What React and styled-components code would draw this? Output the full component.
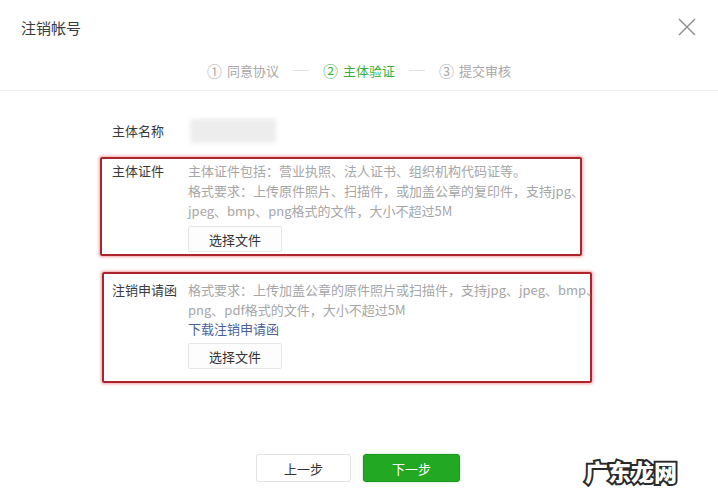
import React from "react";
import styled, { createGlobalStyle } from "styled-components";

const Global = createGlobalStyle`
  html, body { margin: 0; padding: 0; background: #fff; }
  body { font-family: "Noto Sans CJK SC", "Noto Sans", sans-serif; color: #333; }
  * { box-sizing: border-box; }
`;

const Page = styled.div`
  position: relative;
  width: 718px;
  height: 500px;
  overflow: hidden;
  display: flex;
  flex-direction: column;
`;

const Header = styled.div`
  height: 54px;
  display: flex;
  align-items: center;
  justify-content: space-between;
  padding: 0 22px 0 21px;
`;

const Title = styled.div`
  font-size: 15px;
  color: #3a3a3a;
`;

const Close = styled.svg`
  width: 18px;
  height: 18px;
  display: block;
`;

const Steps = styled.div`
  height: 37px;
  padding-bottom: 3px;
  border-bottom: 1px solid #ececec;
  display: flex;
  align-items: center;
  justify-content: center;
  gap: 14px;
`;

const Step = styled.div`
  display: flex;
  align-items: center;
  gap: 5px;
  font-size: 13px;
  color: ${(p) => (p.$active ? "#3aae3a" : "#a8a8a8")};
`;

const Num = styled.span`
  font-size: 15px;
`;

const Dash = styled.div`
  width: 16px;
  height: 1px;
  background: #e2e2e2;
`;

const Form = styled.div`
  padding: 30px 0 0 100px;
  display: flex;
  flex-direction: column;
`;

const NameRow = styled.div`
  display: flex;
  align-items: center;
  padding-left: 12px;
  height: 20px;
  margin-bottom: 16px;
`;

const Label = styled.div`
  width: 76px;
  flex: none;
  font-size: 13px;
  line-height: 20px;
  color: #3a3a3a;
`;

const Blurred = styled.div`
  width: 86px;
  height: 24px;
  margin-left: 2px;
  background: #ededed;
  filter: blur(2px);
`;

const Highlight = styled.div`
  display: flex;
  align-items: flex-start;
  margin-left: ${(p) => p.$offset}px;
  width: ${(p) => p.$width}px;
  padding: ${(p) => p.$pad};
  border: 2px solid #ad242b;
  border-radius: 2px;
  box-shadow: 0 0 3px 1px rgba(235, 130, 135, 0.75);
  margin-bottom: ${(p) => p.$gap || 0}px;
`;

const Content = styled.div`
  display: flex;
  flex-direction: column;
  align-items: flex-start;
`;

const Desc = styled.div`
  font-size: 13px;
  line-height: 20px;
  color: #a6a6a6;
  white-space: nowrap;
`;

const Link = styled.a`
  font-size: 13px;
  line-height: 18px;
  color: #4a5f9a;
  text-decoration: none;
`;

const FileButton = styled.div`
  margin-top: 5px;
  width: 94px;
  height: 26px;
  border: 1px solid #e6e6e6;
  border-radius: 2px;
  background: #fdfdfd;
  display: flex;
  align-items: center;
  justify-content: center;
  font-size: 13px;
  color: #333;
`;

const Footer = styled.div`
  margin-top: auto;
  padding-bottom: 18px;
  display: flex;
  justify-content: center;
  gap: 12px;
  padding-right: 2px;
`;

const Button = styled.div`
  width: ${(p) => (p.$primary ? 97 : 95)}px;
  height: 28px;
  border-radius: 3px;
  display: flex;
  align-items: center;
  justify-content: center;
  font-size: 13px;
  background: ${(p) => (p.$primary ? "#22a823" : "#fff")};
  color: ${(p) => (p.$primary ? "#fff" : "#333")};
  border: 1px solid ${(p) => (p.$primary ? "#1e9a1f" : "#e3e3e3")};
  box-shadow: ${(p) => (p.$primary ? "0 0 2px rgba(60,180,60,0.5)" : "none")};
`;

const Watermark = styled.div`
  position: absolute;
  left: 585px;
  top: 454px;
  font-size: 23px;
  font-weight: 900;
  color: #fff;
  -webkit-text-stroke: 4px #2a2a2a;
  paint-order: stroke fill;
`;

export default function App() {
  return (
    <Page>
      <Global />
      <Header>
        <Title>注销帐号</Title>
        <Close viewBox="0 0 18 18">
          <path d="M1 1 L17 17 M17 1 L1 17" stroke="#8a8a8a" strokeWidth="1.3" fill="none" />
        </Close>
      </Header>
      <Steps>
        <Step>
          <Num>①</Num>同意协议
        </Step>
        <Dash />
        <Step $active>
          <Num>②</Num>主体验证
        </Step>
        <Dash />
        <Step>
          <Num>③</Num>提交审核
        </Step>
      </Steps>
      <Form>
        <NameRow>
          <Label>主体名称</Label>
          <Blurred />
        </NameRow>
        <Highlight $offset={0} $width={482} $pad="2px 0 2px 10px" $gap={16}>
          <Label>主体证件</Label>
          <Content>
            <Desc>主体证件包括：营业执照、法人证书、组织机构代码证等。</Desc>
            <Desc>格式要求：上传原件照片、扫描件，或加盖公章的复印件，支持jpg、</Desc>
            <Desc>jpeg、bmp、png格式的文件，大小不超过5M</Desc>
            <FileButton>选择文件</FileButton>
          </Content>
        </Highlight>
        <Highlight $offset={2} $width={490} $pad="6px 0 12px 8px">
          <Label>注销申请函</Label>
          <Content>
            <Desc>格式要求：上传加盖公章的原件照片或扫描件，支持jpg、jpeg、bmp、</Desc>
            <Desc>png、pdf格式的文件，大小不超过5M</Desc>
            <Link>下载注销申请函</Link>
            <FileButton>选择文件</FileButton>
          </Content>
        </Highlight>
      </Form>
      <Footer>
        <Button>上一步</Button>
        <Button $primary>下一步</Button>
      </Footer>
      <Watermark>广东龙网</Watermark>
    </Page>
  );
}
